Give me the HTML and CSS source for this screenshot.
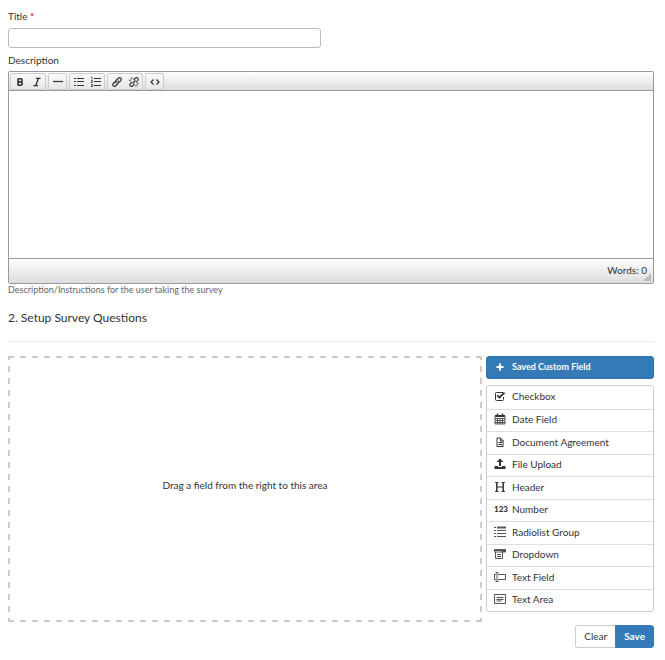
FILE: index.html
```html
<!DOCTYPE html>
<html lang="en">
<head>
<meta charset="utf-8">
<title>Survey setup</title>
<link rel="stylesheet" href="styles.css">
</head>
<body>
<main class="page">
  <form class="survey">
    <label class="label" for="title">Title <span class="required">*</span></label>
    <input class="text-input" id="title" type="text" required>
    <label class="label" for="description">Description</label>
    <div class="editor">
      <div class="toolbar" role="toolbar">
        <div class="tool-group">
          <button class="tool" type="button" aria-label="Bold"><svg viewBox="0 0 12 12"><path d="M4 2.500v7M4 2.800h2.600a1.500 1.500 0 0 1 0 3.100H4M4 5.900h3a1.700 1.700 0 0 1 0 3.300H4" stroke-width="1.600"/></svg></button>
          <button class="tool" type="button" aria-label="Italic"><svg viewBox="0 0 12 12"><path d="M5 2.400h4.500M2.500 9.600H7M7.400 2.400 4.700 9.600" stroke-width="1.300"/></svg></button>
        </div>
        <div class="tool-group">
          <button class="tool" type="button" aria-label="Horizontal rule"><svg viewBox="0 0 12 12"><path d="M1 5.500h10" stroke-width="1.200"/></svg></button>
        </div>
        <div class="tool-group">
          <button class="tool" type="button" aria-label="Bulleted list"><svg viewBox="0 0 12 12"><path d="M1 2.500h2M1 5.500h2M1 9.500h2M4 2.500h7M4 5.500h7M4 9.500h7"/></svg></button>
          <button class="tool" type="button" aria-label="Numbered list"><svg viewBox="0 0 12 12"><path d="M4 2.500h7M4 5.500h7M4 9.500h7"/><path d="M1 1h1v2.500M1 4.500h1.500L1 6.500h2M1 8.500h1.500v2H1M1.500 9.500h1" stroke-width=".8"/></svg></button>
        </div>
        <div class="tool-group">
          <button class="tool" type="button" aria-label="Insert link"><svg viewBox="0 0 12 12"><path d="M5.200 7.200C4 6 4.500 5 5.500 4L7.200 2.300c2-1.700 4 .5 2.500 2.300L8.200 6.200M6.800 4.800C8 6 7.500 7 6.500 8L4.800 9.700c-2 1.700-4-.5-2.500-2.300L3.800 5.800" stroke-width="1.300"/></svg></button>
          <button class="tool" type="button" aria-label="Remove link"><svg viewBox="0 0 12 12"><path d="M5.500 4 7.200 2.300c2-1.700 4 .5 2.500 2.300L8 6.300M6.500 8 4.800 9.700c-2 1.700-4-.5-2.500-2.300L4 5.700M4.500 7.500l3-3" stroke-width="1.200"/><path d="M2 2.500l1.500 1.500M4 1v2M1 4.500h1.700M10 9.500 8.500 8M8 11V9M11 7.500H9.300" stroke-width=".8"/></svg></button>
        </div>
        <div class="tool-group">
          <button class="tool" type="button" aria-label="Source code"><svg viewBox="0 0 12 12"><path d="M4.500 3.500 2 6l2.500 2.500M7.500 3.500 10 6 7.500 8.500" stroke-width="1.200"/></svg></button>
        </div>
      </div>
      <textarea class="editor-body" id="description"></textarea>
      <div class="statusbar">Words: 0<svg class="grip" viewBox="0 0 7 7"><path d="M5 0h2v7H0V5h2V3h3z"/></svg></div>
    </div>
    <p class="help">Description/Instructions for the user taking the survey</p>
    <h2 class="heading">2. Setup Survey Questions</h2>
    <div class="builder">
      <div class="drop-area">Drag a field from the right to this area</div>
      <div class="palette">
        <button class="saved" type="button"><svg class="icon" viewBox="0 0 12 12"><path d="M6 2.500v7M2.500 6h7" stroke-width="2"/></svg>Saved Custom Field</button>
        <ul class="fields">
          <li class="field"><svg class="icon" viewBox="0 0 12 12"><path d="M9.500 7v2.500a1 1 0 0 1-1 1h-6a1 1 0 0 1-1-1v-6a1 1 0 0 1 1-1H9"/><path d="M3.300 5.300 5.500 7.500 10.500 2.700" stroke-width="1.800"/></svg>Checkbox</li>
          <li class="field"><svg class="icon" viewBox="0 0 12 12"><path d="M1 3.500h10v7.500H1zM1 5.500h10M1 7.500h10M1 9.500h10M3.500 5v6M6 5v6M8.500 5v6" stroke-width=".8"/><path d="M1 3h10" stroke-width="2"/><path d="M3.500.5v3M8.500.5v3" stroke-width="1.500"/></svg>Date Field</li>
          <li class="field"><svg class="icon" viewBox="0 0 12 12"><path d="M3 2h3.500L9 4.500v6H3zM6.500 2v3h3M4.500 6.500H8M4.500 8.500H8"/></svg>Document Agreement</li>
          <li class="field"><svg class="icon" viewBox="0 0 12 12"><path class="solid" d="M6 .5 9.500 4H7v4H5V4H2.500zM.5 8h3.500v1h4V8h3.500v3H.5z"/></svg>File Upload</li>
          <li class="field"><svg class="icon" viewBox="0 0 12 12"><path d="M1 1.500h3.500M7.500 1.500H11M1 10.500h3.500M7.500 10.500H11M3 6h6"/><path d="M2.800 1.500v9M9.200 1.500v9" stroke-width="1.500"/></svg>Header</li>
          <li class="field"><span class="icon digits">123</span>Number</li>
          <li class="field"><svg class="icon soft" viewBox="0 0 12 12"><path d="M0 1.500h2M0 4.500h2M0 7.500h2M0 10.500h2M3 4.500h9M3 7.500h9M3 10.500h9"/><path d="M3 1.500h9" stroke-width="2"/></svg>Radiolist Group</li>
          <li class="field"><svg class="icon soft" viewBox="0 0 12 12"><path d="M.5 1.500h11v2.500H.5zM1.500 4v6.500h7V4M3 6.500h4M3 8.500h4M1 2.500h7"/><path class="solid" d="M7.500 1.500h4v2.500h-4z"/></svg>Dropdown</li>
          <li class="field"><svg class="icon soft" viewBox="0 0 12 12"><path d="M2 3.500H.5v5H2M4 3.500h7.500v5H4M3 2v8M1.500 1.500h3M1.500 10.500h3"/></svg>Text Field</li>
          <li class="field"><svg class="icon soft" viewBox="0 0 12 12"><path d="M.5 1.500h11v9H.5zM2.500 4.500h7M2.500 6.500h7M2.500 8h5"/></svg>Text Area</li>
        </ul>
      </div>
    </div>
    <div class="actions">
      <button class="action" type="reset">Clear</button>
      <button class="action primary" type="submit">Save</button>
    </div>
  </form>
</main>
</body>
</html>
```
FILE: styles.css
```css
* { box-sizing: border-box; }
body { margin: 0; background: #fff; color: #333; font: 10px/14px Lato, sans-serif; }
button { font: inherit; color: inherit; margin: 0; }
svg { fill: none; stroke: currentColor; stroke-width: 1; }
.solid { fill: currentColor; stroke: none; }
.page { padding: 9px 11px 0 8px; }
.label { display: block; }
.required { color: #b33; font-weight: 700; }
.text-input { display: block; width: 313px; max-width: 100%; height: 20px; margin: 5px 0; border: 1px solid #bbb; border-radius: 3px; background: #fff; font: inherit; }
.editor { margin-top: 4px; border: 1px solid #999; border-radius: 2px; }
.toolbar { display: flex; gap: 2px; height: 19px; padding: 1px 1px 0; border-bottom: 1px solid #999; background: linear-gradient(#fff, #ddd); }
.tool-group { display: flex; border: 1px solid #ccc; border-radius: 2px; background: linear-gradient(#fafafa, #e6e6e6); }
.tool { display: flex; align-items: center; justify-content: center; width: 17px; padding: 0; border: 0; background: none; }
.tool svg { width: 12px; height: 12px; }
.editor-body { display: block; width: 100%; height: 167px; border: 0; resize: none; font: inherit; outline: 0; }
.statusbar { position: relative; height: 25px; padding: 4px 6px; border-top: 1px solid #999; background: linear-gradient(#fff, #ddd); text-align: right; }
.grip { position: absolute; right: 2px; bottom: 2px; width: 7px; height: 7px; fill: #bbb; stroke: none; }
.help { margin: 0; color: #666; font-size: 9px; line-height: 12px; }
.heading { margin: 14px 0; padding-bottom: 15px; border-bottom: 1px solid #eee; font-size: 12px; line-height: 16px; font-weight: 400; }
.builder { display: grid; grid-template-columns: 1fr 168px; gap: 4px; }
.drop-area {
  display: flex;
  align-items: center;
  justify-content: center;
  min-height: 266px;
  padding-bottom: 8px;
  background:
    repeating-linear-gradient(90deg, #ccc 0 6px, transparent 6px 12px) top / 100% 2px no-repeat,
    repeating-linear-gradient(90deg, #ccc 0 6px, transparent 6px 12px) bottom / 100% 2px no-repeat,
    repeating-linear-gradient(#ccc 0 4px, transparent 4px 10px, #ccc 10px 12px) left / 2px 100% no-repeat,
    repeating-linear-gradient(#ccc 0 4px, transparent 4px 10px, #ccc 10px 12px) right / 2px 100% no-repeat;
}
.saved { display: flex; align-items: center; width: 100%; height: 23px; padding: 0 7px 1px; border: 1px solid #2e75b0; border-radius: 3px; background: #337ab7; color: #fff; font-size: 9px; font-weight: 700; }
.icon { flex: none; width: 12px; height: 12px; margin-right: 6px; }
.soft { color: #555; }
.fields { display: grid; grid-auto-rows: 1fr; height: 227px; margin: 6px 0 0; padding: 0; border: 1px solid #ccc; border-radius: 3px; list-style: none; }
.field { display: flex; align-items: center; padding: 0 7px 2px; }
.field + .field { border-top: 1px solid #ddd; }
.digits { font-size: 8px; line-height: 12px; font-weight: 900; }
.actions { display: flex; justify-content: flex-end; margin-top: 3px; }
.action { height: 23px; padding: 0 8px 2px; border: 1px solid #ccc; border-right: 0; border-radius: 3px 0 0 3px; background: #fff; }
.primary { border: 1px solid #337ab7; border-radius: 0 3px 3px 0; background: #337ab7; color: #fff; font-weight: 700; }
```
